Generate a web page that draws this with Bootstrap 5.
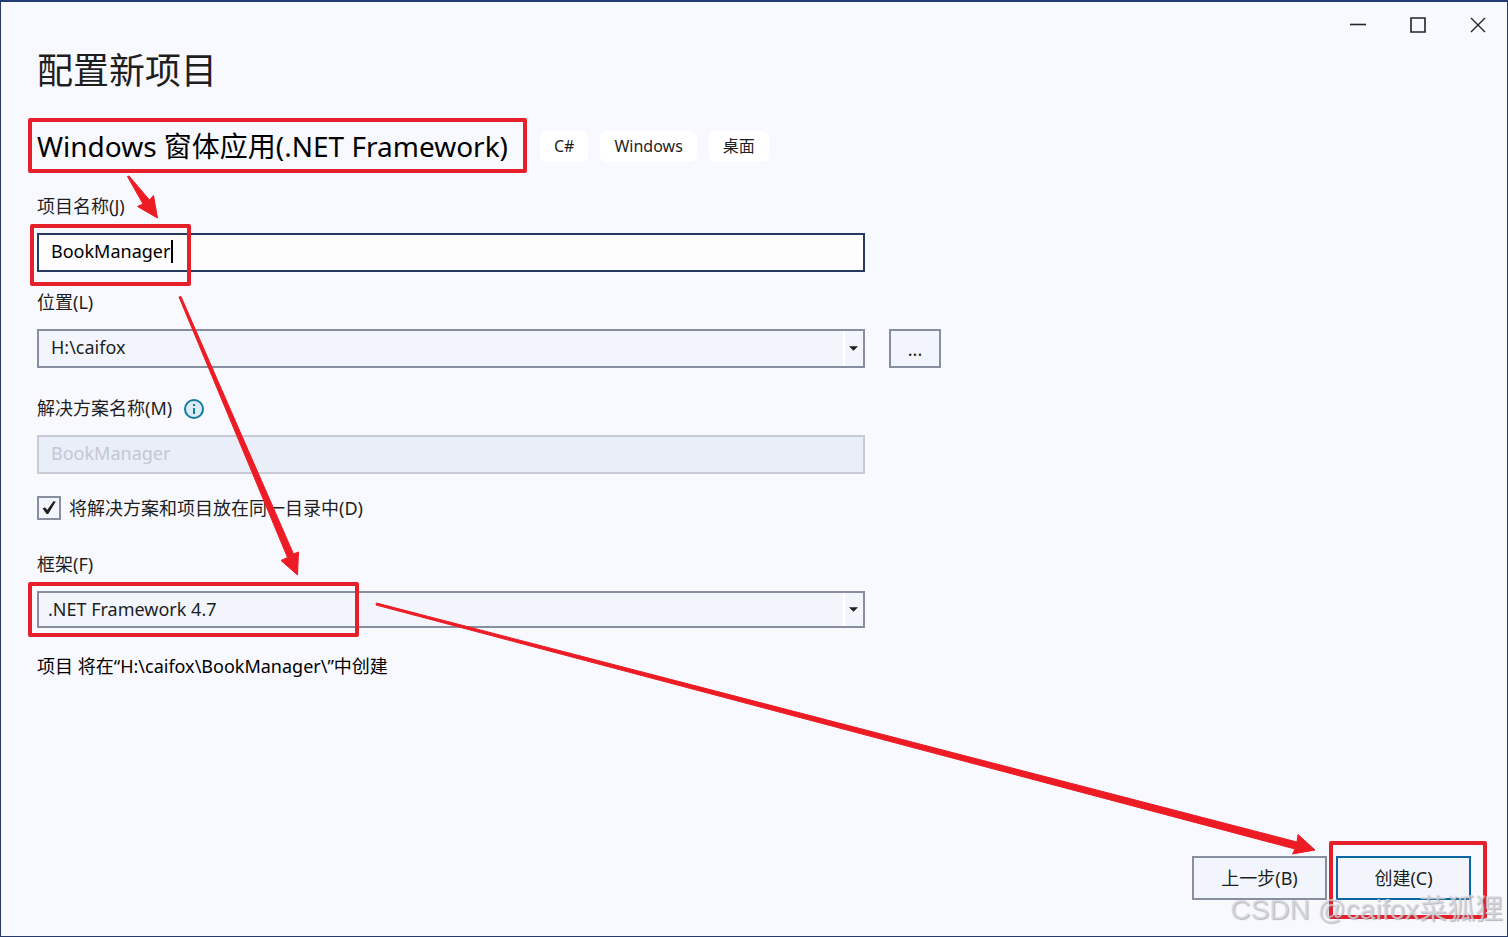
<!DOCTYPE html>
<html lang="zh-CN">
<head>
<meta charset="utf-8">
<meta name="viewport" content="width=device-width, initial-scale=1">
<title>配置新项目</title>
<link href="https://cdn.jsdelivr.net/npm/bootstrap@5.3.0/dist/css/bootstrap.min.css" rel="stylesheet">
<style>
  :root { --ink: #1e1e1e; --edge: #868e9f; --face: #f2f5fc; --navy: #26395f; --mark-red: #e5202a; }
  body { font-family: "Noto Sans", "Noto Sans CJK SC", sans-serif; font-size: 18px; line-height: 24px; color: var(--ink); background: #f8f9fe; }
  .dialog-window { border: 1px solid #263a68; border-top: 2px solid #213c75; }
  .caption-bar { height: 44px; margin-right: -1px; }
  .caption-btn { width: 60px; height: 41px; border: 0; background: none; color: #20242e; }
  .page-pad { padding: 0 36px 36px; }
  h1 { font-size: 36px; line-height: 50px; font-weight: 400; }
  h2 { font-size: 28px; line-height: 52px; font-weight: 400; color: #000; }
  .headline { margin-top: 24px; gap: 12px; }
  .headline h2 { margin-right: 12px; padding-right: 8px; }
  .tag-pill { font-size: 16px; line-height: 31px; padding: 0 14px; border-radius: 6px; background: #fff; }
  .fields { max-width: 828px; }
  .field-label { display: block; margin-bottom: 15px; }
  .field-box.form-control, .field-box.form-select {
    height: 39px; padding: 0 12px 2px; border: 2px solid var(--edge); border-radius: 0;
    font-size: 18px; line-height: 33px; color: var(--ink); background-color: var(--face);
  }
  .field-box.form-control { padding-bottom: 4px; line-height: 31px; }
  .field-box.form-select {
    background-image: url("data:image/svg+xml,%3Csvg xmlns='http://www.w3.org/2000/svg' viewBox='0 0 10 5'%3E%3Cpath d='M0 0h10L5 5z' fill='%231e1e1e'/%3E%3C/svg%3E"), linear-gradient(#fff, #fff);
    background-size: 9px 5px, 2px 100%; background-position: right 5px center, right 18px center; background-repeat: no-repeat;
  }
  .field-box.framework-box { height: 37px; padding-left: 9px; }
  .field-box.is-active { border-color: var(--navy); background-color: #fdfdfd; color: #000; }
  .field-box.form-control:disabled { border-color: #c6cbd7; background-color: #eaeef8; color: #c3c8d2; opacity: 1; }
  .gap-a { margin-top: 22px; } .gap-b { margin-top: 18px; } .gap-c { margin-top: 28px; }
  .text-caret { left: 134px; top: 7px; width: 2px; height: 23px; background: #000; }
  .flat-btn { border: 2px solid var(--edge); border-radius: 0; background: var(--face); color: var(--ink); font-size: 18px; padding: 0; }
  .browse-btn { left: calc(100% + 24px); bottom: 0; width: 52px; height: 39px; }
  .step-btns { gap: 9px; }
  .step-btn { width: 135px; height: 44px; }
  .step-btn.go { border-color: #0b68a4; }
  .tick-box.form-check-input { width: 24px; height: 24px; margin: 0; border: 2px solid var(--edge); border-radius: 0; background-color: var(--face); }
  .tick-box.form-check-input:checked { border-color: var(--edge); background-color: var(--face); background-size: 20px 20px;
    background-image: url("data:image/svg+xml,%3Csvg xmlns='http://www.w3.org/2000/svg' viewBox='0 0 20 20'%3E%3Cpath d='M3.6 10.6 6 9.2l2.2 2.8L14.4 3.2l2.4.4L9.2 16H7.6z' fill='%231e1e1e'/%3E%3C/svg%3E"); }
  /* hand-drawn style highlights lying over the form */
  .hl { border: 4px solid var(--mark-red); border-radius: 2px; pointer-events: none; }
  .hl-title { inset: -2px -11px -1px -9px; }
  .hl-name { left: -7px; top: -9px; width: 161px; height: 62px; }
  .hl-frame { left: -9px; top: -9px; width: 331px; height: 55px; }
  .hl-go { inset: -15px -16px -19px -7px; }
  .arrows { inset: 0; pointer-events: none; }
  .watermark { right: 4px; bottom: 8px; font: 28px/36px "Liberation Sans", "Noto Sans CJK SC", sans-serif; color: rgba(215, 217, 223, .75); text-shadow: 1px 1px 1px rgba(120, 120, 130, .5); pointer-events: none; }
</style>
</head>
<body>
<div class="dialog-window position-relative min-vh-100 d-flex flex-column">
  <header class="caption-bar d-flex justify-content-end">
    <button class="caption-btn" type="button" aria-label="最小化"><svg width="16" height="16" fill="none" stroke="currentColor"><path d="M0 7.500h16" stroke-width="1.6"/></svg></button>
    <button class="caption-btn" type="button" aria-label="最大化"><svg width="16" height="16" fill="none" stroke="currentColor"><path d="M1 1h14v14H1z" stroke-width="1.6"/></svg></button>
    <button class="caption-btn" type="button" aria-label="关闭"><svg width="16" height="16" fill="none" stroke="currentColor"><path d="M1 1l14 14M15 1 1 15" stroke-width="1.4"/></svg></button>
  </header>

  <main class="page-pad flex-grow-1 d-flex flex-column">
    <h1 class="m-0">配置新项目</h1>
    <div class="headline d-flex flex-wrap align-items-center">
      <h2 class="position-relative mb-0">Windows 窗体应用(.NET Framework)<span class="hl hl-title position-absolute"></span></h2>
      <span class="tag-pill">C#</span><span class="tag-pill">Windows</span><span class="tag-pill">桌面</span>
    </div>

    <form id="project" class="fields">
      <div class="gap-a">
        <label class="field-label" for="pname">项目名称(J)</label>
        <div class="position-relative">
          <input id="pname" class="field-box is-active form-control" type="text" value="BookManager">
          <span class="text-caret position-absolute"></span>
          <span class="hl hl-name position-absolute"></span>
        </div>
      </div>
      <div class="gap-b position-relative">
        <label class="field-label" for="place">位置(L)</label>
        <select id="place" class="field-box form-select"><option>H:\caifox</option></select>
        <button class="flat-btn browse-btn position-absolute" type="button" aria-label="浏览">...</button>
      </div>
      <div class="gap-c">
        <div class="d-flex gap-2">
          <label class="field-label" for="sname">解决方案名称(M)</label>
          <svg class="ms-1" width="20" height="24" viewBox="0 -3 20 24"><circle cx="10" cy="10" r="9" fill="#dcecf5" stroke="#137c9e" stroke-width="2"/><path d="M9 5h2v2H9zM9 9h2v6H9z" fill="#137c9e"/></svg>
        </div>
        <input id="sname" class="field-box form-control" type="text" value="BookManager" disabled>
      </div>
      <div class="gap-a d-flex align-items-center gap-2">
        <input id="same" class="tick-box form-check-input" type="checkbox" checked>
        <label for="same">将解决方案和项目放在同一目录中(D)</label>
      </div>
      <div class="gap-c pt-1">
        <label class="field-label" for="fw">框架(F)</label>
        <div class="position-relative">
          <select id="fw" class="field-box framework-box form-select"><option>.NET Framework 4.7</option></select>
          <span class="hl hl-frame position-absolute"></span>
        </div>
      </div>
      <p class="gap-a pt-1 mb-0 text-black">项目 将在“H:\caifox\BookManager\”中创建</p>
    </form>

    <footer class="step-btns mt-auto d-flex justify-content-end">
      <button class="flat-btn step-btn" type="button">上一步(B)</button>
      <div class="position-relative">
        <button class="flat-btn step-btn go" type="submit" form="project">创建(C)</button>
        <span class="hl hl-go position-absolute"></span>
      </div>
    </footer>
  </main>

  <svg class="arrows position-absolute w-100 h-100" viewBox="1 2 1506 934" preserveAspectRatio="none" fill="#ed1c24" stroke="#ed1c24" stroke-linejoin="round" aria-hidden="true">
    <path d="M127.500 176.500 129 176 149.500 200 153.500 195.500 157.500 218 137.500 206.500 143 204z"/>
    <path d="M179 297 181 296.500 293.500 554 298.500 552 297.500 575 281 560.500 287.500 557.500z"/>
    <path d="M376.500 603 376 605 1295 849 1292.500 854 1315 850 1298 834.500 1297 842z"/>
  </svg>
  <div class="watermark position-absolute">CSDN @caifox菜狐狸</div>
</div>
<script src="https://cdn.jsdelivr.net/npm/bootstrap@5.3.0/dist/js/bootstrap.bundle.min.js"></script>
</body>
</html>
